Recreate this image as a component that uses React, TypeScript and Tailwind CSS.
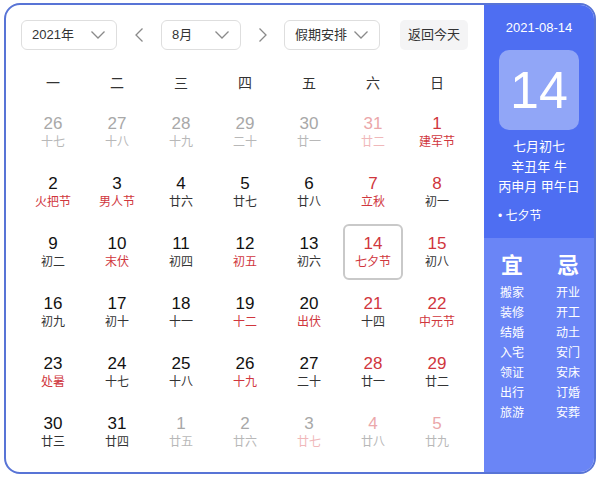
import React from "react";

type Cell = { d: number; l: string; t: "n" | "r" | "o" | "or"; lr?: boolean; ld?: "o" | "or" | "n" };

const weeks: Cell[][] = [
  [
    { d: 26, l: "十七", t: "o" },
    { d: 27, l: "十八", t: "o" },
    { d: 28, l: "十九", t: "o" },
    { d: 29, l: "二十", t: "o" },
    { d: 30, l: "廿一", t: "o" },
    { d: 31, l: "廿二", t: "or" },
    { d: 1, l: "建军节", t: "r", lr: true },
  ],
  [
    { d: 2, l: "火把节", t: "n", lr: true },
    { d: 3, l: "男人节", t: "n", lr: true },
    { d: 4, l: "廿六", t: "n" },
    { d: 5, l: "廿七", t: "n" },
    { d: 6, l: "廿八", t: "n" },
    { d: 7, l: "立秋", t: "r", lr: true },
    { d: 8, l: "初一", t: "r" },
  ],
  [
    { d: 9, l: "初二", t: "n" },
    { d: 10, l: "末伏", t: "n", lr: true },
    { d: 11, l: "初四", t: "n" },
    { d: 12, l: "初五", t: "n", lr: true },
    { d: 13, l: "初六", t: "n" },
    { d: 14, l: "七夕节", t: "r", lr: true },
    { d: 15, l: "初八", t: "r" },
  ],
  [
    { d: 16, l: "初九", t: "n" },
    { d: 17, l: "初十", t: "n" },
    { d: 18, l: "十一", t: "n" },
    { d: 19, l: "十二", t: "n", lr: true },
    { d: 20, l: "出伏", t: "n", lr: true },
    { d: 21, l: "十四", t: "r" },
    { d: 22, l: "中元节", t: "r", lr: true },
  ],
  [
    { d: 23, l: "处暑", t: "n", lr: true },
    { d: 24, l: "十七", t: "n" },
    { d: 25, l: "十八", t: "n" },
    { d: 26, l: "十九", t: "n", lr: true },
    { d: 27, l: "二十", t: "n" },
    { d: 28, l: "廿一", t: "r" },
    { d: 29, l: "廿二", t: "r" },
  ],
  [
    { d: 30, l: "廿三", t: "n" },
    { d: 31, l: "廿四", t: "n" },
    { d: 1, l: "廿五", t: "o" },
    { d: 2, l: "廿六", t: "o" },
    { d: 3, l: "廿七", t: "o", ld: "or" },
    { d: 4, l: "廿八", t: "or", ld: "o" },
    { d: 5, l: "廿九", t: "or", ld: "o" },
  ],
];

const dayColor = (t: Cell["t"]) =>
  t === "n" ? "text-[#111]" : t === "r" ? "text-[#d0363d]" : t === "o" ? "text-[#a8a8a8]" : "text-[#eba7aa]";

const lunarColor = (c: Cell) => {
  if (c.ld === "o") return "text-[#b8b8b8]";
  if (c.ld === "or") return "text-[#f0b8ba]";
  if (c.t === "o") return "text-[#b8b8b8]";
  if (c.t === "or") return "text-[#f0b8ba]";
  if (c.lr) return "text-[#d0363d]";
  return "text-[#333]";
};

const Chevron = ({ dir }: { dir: "down" | "left" | "right" }) => {
  if (dir === "down")
    return (
      <svg width="16" height="10" viewBox="0 0 16 10" fill="none">
        <path d="M1.5 1.5 L8 8 L14.5 1.5" stroke="#8a8a8a" strokeWidth="1.3" />
      </svg>
    );
  return (
    <svg width="10" height="16" viewBox="0 0 10 16" fill="none">
      <path
        d={dir === "left" ? "M8.5 1.5 L2 8 L8.5 14.5" : "M1.5 1.5 L8 8 L1.5 14.5"}
        stroke="#8a8a8a"
        strokeWidth="1.3"
      />
    </svg>
  );
};

const Select = ({ label, w }: { label: string; w: string }) => (
  <div
    className={`${w} h-[30px] flex items-center justify-between border border-[#dedede] rounded-[6px] pl-[10px] pr-[10px] text-[13px] text-[#333]`}
  >
    <span>{label}</span>
    <Chevron dir="down" />
  </div>
);

const yi = ["搬家", "装修", "结婚", "入宅", "领证", "出行", "旅游"];
const ji = ["开业", "开工", "动土", "安门", "安床", "订婚", "安葬"];

export default function App() {
  return (
    <div
      className="w-[599px] h-[479px] bg-white pt-[3px] pl-[4px]"
      style={{ fontFamily: '"Liberation Sans", "Noto Sans CJK SC", sans-serif' }}
    >
      <div className="w-[592px] h-[471px] border-2 border-[#5874d6] rounded-[16px] overflow-hidden flex">
        <div className="flex-1 pl-[15px] pt-[15px]">
          <div className="flex items-center h-[30px]">
            <Select label="2021年" w="w-[96px]" />
            <div className="w-[44px] flex justify-center">
              <Chevron dir="left" />
            </div>
            <Select label="8月" w="w-[80px]" />
            <div className="w-[43px] flex justify-center">
              <Chevron dir="right" />
            </div>
            <Select label="假期安排" w="w-[96px]" />
            <div className="ml-[20px] w-[68px] h-[30px] bg-[#f4f4f5] rounded-[5px] flex items-center justify-center text-[13px] text-[#333]">
              返回今天
            </div>
          </div>
          <div className="grid grid-cols-7 w-[448px] mt-[18px] h-[30px] items-center text-[14px] text-[#333]">
            {["一", "二", "三", "四", "五", "六", "日"].map((w) => (
              <div key={w} className="text-center">
                {w}
              </div>
            ))}
          </div>
          <div className="mt-[4px] w-[448px]">
            {weeks.map((row, i) => (
              <div key={i} className="grid grid-cols-7 h-[60px]">
                {row.map((c, j) => {
                  const sel = i === 2 && j === 5;
                  return (
                    <div key={j} className="flex items-center justify-center">
                      <div
                        className={`flex flex-col items-center justify-center ${
                          sel ? "w-[60px] h-[56px] border-2 border-[#c9c9c9] rounded-[6px]" : ""
                        }`}
                      >
                        <div className={`text-[17px] leading-[20px] ${dayColor(c.t)}`}>{c.d}</div>
                        <div className={`text-[12px] leading-[17px] ${lunarColor(c)}`}>{c.l}</div>
                      </div>
                    </div>
                  );
                })}
              </div>
            ))}
          </div>
        </div>
        <div className="w-[110px] flex flex-col text-white">
          <div className="bg-[#4e6ef2] h-[233px] flex flex-col items-center pt-[14px]">
            <div className="text-[13px] leading-[18px]">2021-08-14</div>
            <div className="mt-[13px] w-[80px] h-[80px] rounded-[10px] bg-[#91a6f7] flex items-center justify-center text-[52px] leading-none">
              14
            </div>
            <div className="mt-[7px] text-[13px] leading-[20px] text-center">
              <div>七月初七</div>
              <div>辛丑年 牛</div>
              <div>丙申月 甲午日</div>
            </div>
            <div className="self-start pl-[14px] mt-[10px] text-[12px] leading-[18px]">• 七夕节</div>
          </div>
          <div className="flex-1 bg-[#6a85f6] flex justify-between pl-[16px] pr-[14px] pt-[14px]">
            <div className="flex flex-col items-center">
              <div className="text-[22px] font-bold leading-[28px] mb-[3px]">宜</div>
              {yi.map((t) => (
                <div key={t} className="text-[12px] leading-[20px]">
                  {t}
                </div>
              ))}
            </div>
            <div className="flex flex-col items-center">
              <div className="text-[22px] font-bold leading-[28px] mb-[3px]">忌</div>
              {ji.map((t) => (
                <div key={t} className="text-[12px] leading-[20px]">
                  {t}
                </div>
              ))}
            </div>
          </div>
        </div>
      </div>
    </div>
  );
}
